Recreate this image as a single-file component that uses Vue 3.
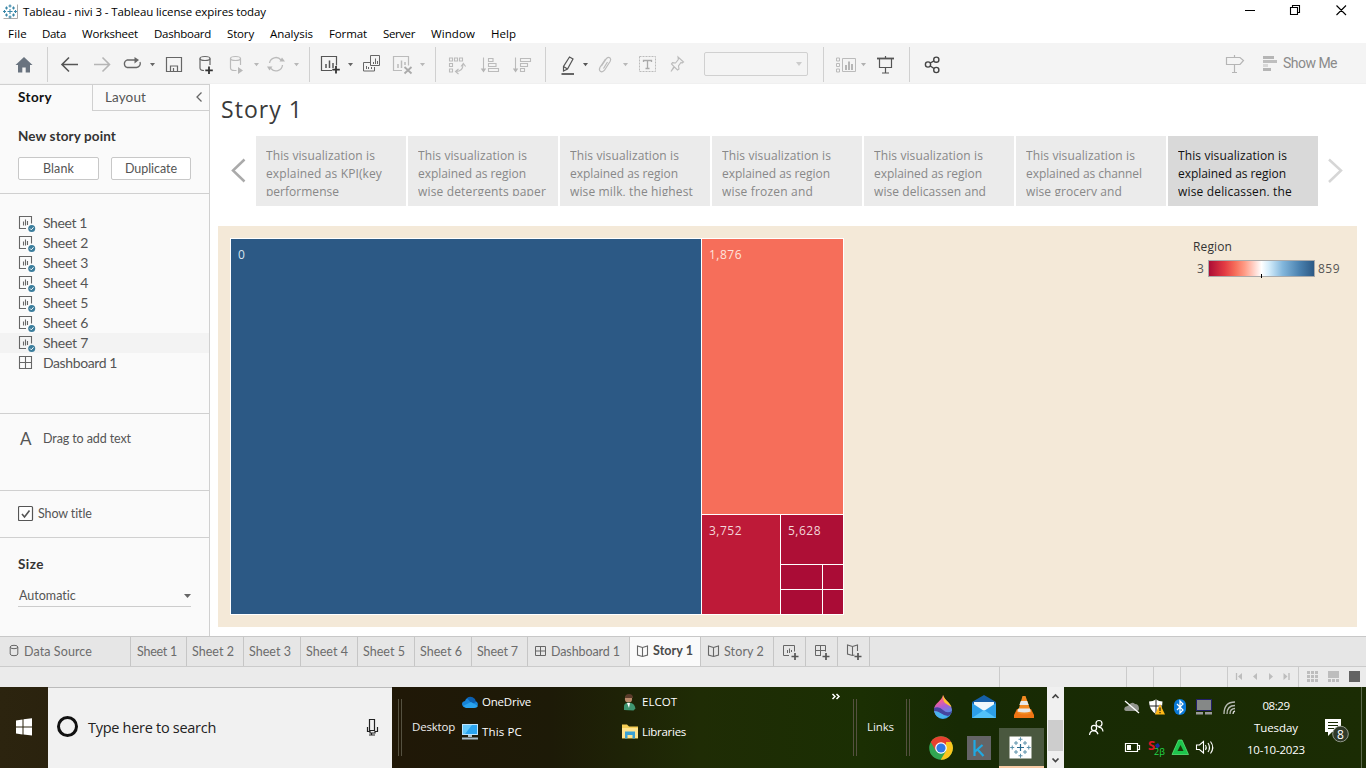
<script setup>
import { h } from 'vue'

// An icon whose drawing uses window coordinates: the viewBox is its slot in the window.
const Ic = (p, { slots }) =>
  h('svg', { width: p.w, height: p.h, viewBox: `${p.x} ${p.y} ${p.w} ${p.h}` }, slots.default ? slots.default() : [])

// Spreads a label's letters so that it takes the given width.
const vFit = {
  mounted(el, { value }) {
    const natural = el.getBoundingClientRect().width
    el.style.letterSpacing = (value - natural) / el.textContent.length + 'px'
  }
}

const menus = [
  ['File', 8, 19], ['Data', 42, 24], ['Worksheet', 82, 56], ['Dashboard', 154, 57], ['Story', 227, 27],
  ['Analysis', 270, 43], ['Format', 329, 38], ['Server', 383, 32], ['Window', 431, 44], ['Help', 491, 25]
].map(([name, x, w], i, all) => ({ name, w, gap: i ? x - all[i - 1][1] - all[i - 1][2] : 8 }))

const sheets = [1, 2, 3, 4, 5, 6, 7]
const sheetTabs = [
  { n: 1, w: 56, t: 40 }, { n: 2, w: 57, t: 42 }, { n: 3, w: 57, t: 42 }, { n: 4, w: 57, t: 42 },
  { n: 5, w: 57, t: 42 }, { n: 6, w: 57, t: 42 }, { n: 7, w: 56, t: 41 }
]
const points = [
  [['explained as KPI(key', 116], ['performense', 73]],
  [['explained as region', 108], ['wise detergents paper', 128]],
  [['explained as region', 108], ['wise milk, the highest', 123]],
  [['explained as region', 108], ['wise frozen and', 91]],
  [['explained as region', 108], ['wise delicassen and', 112]],
  [['explained as channel', 116], ['wise grocery and', 96]],
  [['explained as region', 108], ['wise delicassen, the', 114]]
]
const stat = [127, 27, 27, 47, 71]
const dots = [[0, -11], [0, 11], [-11, 0], [11, 0], [-6, -6], [6, -6], [-6, 6], [6, 6]]
</script>

<template>
  <div class="win">
    <header class="title">
      <Ic :x="0" :y="0" :w="23" :h="24">
        <rect x="3" y="4" width="15" height="15" fill="#fff" />
        <path d="M3.5 18.5h14v-14" fill="none" stroke="#aaa" />
        <path d="M10 9v5M7.5 11.500h5M10 4.500v3M8.500 6h3M10 15.500v3M8.500 17h3M4.500 10v3M3 11.500h3M15.500 10v3M14 11.500h3M6.500 6.500v3M5 8h3M13.500 6.500v3M12 8h3M6.500 13.500v3M5 15h3M13.500 13.500v3M12 15h3" stroke="#3a87a8" stroke-width="1.1" />
      </Ic>
      <span class="up" v-fit="243">Tableau - nivi 3 - Tableau license expires today</span>
      <Ic class="push" :x="1230" :y="0" :w="136" :h="24">
        <g fill="none" stroke="#000" stroke-width="1.100">
          <path d="M1245 10.500h10M1290.500 7.500h7v7h-7zM1292.500 7.500v-2h7v7h-2M1336.500 5.500l9.500 9.500M1346 5.500l-9.500 9.500" />
        </g>
      </Ic>
    </header>
    <nav class="menu">
      <span v-for="m in menus" :key="m.name" class="mi" :style="{ marginLeft: m.gap + 'px', width: m.w + 'px' }"><span v-fit="m.w">{{ m.name }}</span></span>
    </nav>

    <div class="toolbar">
      <Ic :x="0" :y="43" :w="47" :h="41"><path d="M24 57l8.500 8H30v7.500h-4.300v-5h-3.400v5H18V65h-2.500z" fill="#69737f" /></Ic>
      <i class="bar"></i>
      <Ic :x="48" :y="43" :w="66" :h="41">
        <path d="M62.500 64.500H78M69 57.500l-7 7 7 7" fill="none" stroke="#555" stroke-width="1.600" />
        <path d="M94 64.500h15.500M102.500 57.500l7 7-7 7" fill="none" stroke="#b5b5b5" stroke-width="1.600" />
      </Ic>
      <Ic :x="114" :y="43" :w="46" :h="41">
        <path d="M131 67.500h-4a4 4 0 0 1 0-7.500h10M131 67.500h5.500a4 4 0 0 0 3.500-5.500" fill="none" stroke="#666" stroke-width="1.300" />
        <path d="M134.500 57l4.500 3-4.500 3.500z" fill="#666" /><path d="M150 63h5l-2.500 3.300z" fill="#666" />
      </Ic>
      <Ic :x="160" :y="43" :w="30" :h="41"><path d="M166.500 57.500h15v14h-15zM170.500 71v-5h7v5M173.500 71v-3" fill="none" stroke="#666" stroke-width="1.200" /></Ic>
      <Ic :x="190" :y="43" :w="34" :h="41">
        <g fill="none" stroke="#666" stroke-width="1.200"><ellipse cx="205" cy="58.500" rx="5" ry="2" /><path d="M200 58.500v9.500q0 2.500 4 2.500M210 58.500v6.500" /></g>
        <path d="M209 66.500v7.500M205.300 70.300h7.500" stroke="#333" stroke-width="1.800" />
      </Ic>
      <Ic :x="224" :y="43" :w="40" :h="41">
        <g fill="none" stroke="#bbb" stroke-width="1.200"><ellipse cx="235.500" cy="58.500" rx="5" ry="2" /><path d="M230.500 58.500v9.500q0 2.500 4 2.500h2M240.500 58.500v6.500" /></g>
        <path d="M238 67l5 3.500-5 3.500zM254 63h5l-2.500 3.300z" fill="#b8b8b8" />
      </Ic>
      <Ic :x="264" :y="43" :w="45" :h="41">
        <path d="M269.500 63a6.500 6.500 0 0 1 11.500-3M282.500 65a6.500 6.500 0 0 1-11.500 3.500" fill="none" stroke="#bbb" stroke-width="1.300" />
        <path d="M279.500 61.500h5.500l-3-4zM267 66.500h5.500l-3 4zM294 63h5l-2.500 3.300z" fill="#b8b8b8" />
      </Ic>
      <i class="bar"></i>
      <Ic :x="310" :y="43" :w="50" :h="41">
        <path d="M332 70.500h-10.500v-14h15v9" fill="none" stroke="#555" stroke-width="1.200" />
        <path d="M326 64v4M329.500 60.500v7.500M333 63v5" stroke="#555" stroke-width="1.500" />
        <path d="M336 66v7.500M332.300 69.700h7.500" stroke="#333" stroke-width="1.800" /><path d="M348 63h5l-2.500 3.300z" fill="#666" />
      </Ic>
      <Ic :x="360" :y="43" :w="26" :h="41"><path d="M370.500 55.500h9v10h-9zM370.500 62.500h-7v8.500h11v-4M373.500 62v2M375.500 58.500V64M377.500 61v3M366.500 66v3M368.500 67v2M371.500 67v2" fill="none" stroke="#666" /></Ic>
      <Ic :x="386" :y="43" :w="49" :h="41">
        <path d="M402 70.500h-8.500v-14h15v9" fill="none" stroke="#bbb" stroke-width="1.200" />
        <path d="M398 64v4M401.500 60.500v7.500M405 62v3" stroke="#bbb" stroke-width="1.500" />
        <path d="M404.500 67l7 6.500M411.500 67l-7 6.500" stroke="#aaa" stroke-width="1.800" /><path d="M420 63h5l-2.500 3.300z" fill="#b8b8b8" />
      </Ic>
      <i class="bar"></i>
      <Ic :x="436" :y="43" :w="109" :h="41">
        <g fill="none" stroke="#bbb" stroke-width="1.100">
          <path d="M449.500 58h3v3h-3zM454.500 58h3v3h-3zM459.500 58h3v3h-3zM449.500 63.500h3v3h-3zM449.500 69h3v3h-3zM463 64.500q0 7-7 7M461 66.500l2.300-3 2.300 3M458.500 69l-3 2.500 3 2.500" />
          <path d="M483.500 57.500V70M488.500 58.500h4.500v3h-4.500zM488.500 63.500h7.500v3h-7.500zM488.500 68.500h10v3h-10z" />
          <path d="M515.500 57.500V70M520.500 58.500h10v3h-10zM520.500 63.500h7v3h-7zM520.500 68.500h4v3h-4z" />
        </g>
        <path d="M480.700 68.500h5.500l-2.700 4zM512.800 68.500h5.500l-2.700 4z" fill="#b5b5b5" />
      </Ic>
      <i class="bar"></i>
      <Ic :x="546" :y="43" :w="84" :h="41">
        <path d="M569.500 57l3.500 2-5.500 10-4 2v-4.500zM563.500 66.500l4 2.500" fill="none" stroke="#555" stroke-width="1.200" />
        <path d="M561.500 74h12.500" stroke="#555" stroke-width="1.800" /><path d="M583 63h5l-2.500 3.300z" fill="#555" />
        <path d="M601.500 66l5-7.500q2-2 3.700-.3 1 1.300 0 3l-5.700 9q-2 2.500-4.300 1-1.500-1.500-.2-4l5.500-8M603.500 68.500l4-6.500" fill="none" stroke="#bbb" stroke-width="1.200" />
        <path d="M623 63h5l-2.500 3.300z" fill="#b8b8b8" />
      </Ic>
      <Ic :x="630" :y="43" :w="74" :h="41">
        <rect x="639.500" y="56.500" width="16" height="15" fill="none" stroke="#bbb" stroke-dasharray="2 1" />
        <path d="M643.500 62v-1.500h8V62M647.500 60.500v8M645.500 68.500h4" fill="none" stroke="#aaa" stroke-width="1.300" />
        <path d="M678 57l5.500 5-1.500 1-1-.5-2.500 3.500.5 3-1.500 1-3-3-3.500 4.500 3-5-2.500-2.500 1-1.300 3 .3 2.800-3.500z" fill="none" stroke="#bbb" stroke-width="1.100" />
      </Ic>
      <div class="combo"><Ic :x="795" :y="60" :w="7" :h="8"><path d="M796 62h6l-3 4z" fill="#ccc" /></Ic></div>
      <i class="bar far"></i>
      <Ic :x="824" :y="43" :w="85" :h="41">
        <path d="M836.500 58h3v3h-3zM836.500 63.500h3v3h-3zM836.500 69h3v3h-3zM842.500 58.500h13v13h-13z" fill="none" stroke="#bbb" />
        <path d="M846 65v5M849 61.500v8.500M852 64v6" stroke="#b0b0b0" stroke-width="1.800" /><path d="M861 63h5l-2.500 3.300z" fill="#b0b0b0" />
        <path d="M879.500 58.500v9h12v-9M885.500 56v2M885.500 67.500V73M882 73h7" fill="none" stroke="#555" stroke-width="1.200" /><path d="M877 58.500h17" stroke="#555" stroke-width="1.800" />
      </Ic>
      <i class="bar"></i>
      <Ic :x="910" :y="43" :w="40" :h="41"><g fill="none" stroke="#444" stroke-width="1.400"><circle cx="928" cy="64.500" r="2.600" /><circle cx="936.300" cy="59.700" r="2.600" /><circle cx="936.300" cy="70" r="2.600" /><path d="M930.300 63l3.700-2.200M930.300 66l3.700 2.500" /></g></Ic>
      <Ic class="push" :x="1220" :y="43" :w="63" :h="41">
        <path d="M1226.500 57.500h13.500l3.500 3-3.500 4h-13.500zM1234.500 55v2.500M1234.500 64.500v8M1232 72.500h5" fill="none" stroke="#b5b5b5" stroke-width="1.200" />
        <path d="M1263 56h11v3h-11zM1263 68h8v3h-8z" fill="#b5b5b5" /><path d="M1263 60h14v3h-14z" fill="#bebebe" /><path d="M1263 64h5v3h-5z" fill="#d8d8d8" />
      </Ic>
      <span class="showme"><span v-fit="54">Show Me</span></span>
    </div>

    <main class="main">
      <aside class="side">
        <div class="stabs"><div class="st1"><b v-fit="34">Story</b></div><div class="st2"><span class="up" v-fit="41">Layout</span><Ic :x="193" :y="90" :w="10" :h="14"><path d="M201.500 91.500l-4.500 4.500 4.500 4.500" fill="none" stroke="#666" stroke-width="1.300" /></Ic></div></div>
        <section class="newp">
          <h3><span v-fit="98">New story point</span></h3>
          <div class="btns"><button><span v-fit="31">Blank</span></button><button><span v-fit="52">Duplicate</span></button></div>
        </section>
        <ul class="list">
          <li v-for="n in sheets" :key="n" :class="{ hov: n === 7 }">
            <Ic :x="18" :y="213" :w="25" :h="20">
              <path d="M26 228.500h-6.500v-12h12v7M23.500 221.500v4M25.500 219.500v6M27.500 221v4" fill="none" stroke="#666" stroke-width="1.100" />
              <circle cx="31.700" cy="228.600" r="3.500" fill="#3b7d9c" /><path d="M30 228.500l1.300 1.300 2.200-2.500" fill="none" stroke="#fff" />
            </Ic>
            <span class="up" v-fit="n === 1 ? 44 : 45">Sheet {{ n }}</span>
          </li>
          <li><Ic :x="18" :y="353" :w="25" :h="20"><path d="M19.500 356.500h12v12h-12zM25.500 356.500v12M19.500 362.500h12" fill="none" stroke="#666" stroke-width="1.100" /></Ic><span class="up" v-fit="74">Dashboard 1</span></li>
        </ul>
        <section class="drag"><span class="big">A</span><span v-fit="88">Drag to add text</span></section>
        <section class="show"><Ic :x="18" :y="505" :w="20" :h="17"><rect x="18.500" y="506.500" width="14" height="14" rx="1" fill="#fff" stroke="#555" stroke-width="1.200" /><path d="M22 514l2.500 3 5-6.500" fill="none" stroke="#555" stroke-width="1.600" /></Ic><span v-fit="54">Show title</span></section>
        <section class="size"><h3><span v-fit="26">Size</span></h3><div class="sel"><span v-fit="57">Automatic</span><Ic :x="184" :y="592" :w="7" :h="6"><path d="M184 593h7l-3.500 4z" fill="#666" /></Ic></div></section>
      </aside>

      <div class="story">
        <h1><span v-fit="82">Story 1</span></h1>
        <div class="nav">
          <Ic :x="218" :y="136" :w="38" :h="70"><path d="M244.500 159.500L233 170.500l11.500 11" fill="none" stroke="#aaa" stroke-width="2.500" /></Ic>
          <div class="cards">
            <div v-for="(p, i) in points" :key="i" class="card" :class="{ on: i === 6 }"><div class="clip">
              <div><span v-fit="109">This visualization is</span></div>
              <div v-for="l in p" :key="l[0]"><span v-fit="l[1]">{{ l[0] }}</span></div>
            </div></div>
          </div>
          <Ic :x="1318" :y="136" :w="39" :h="70"><path d="M1329 159.500l12 11-12 11.500" fill="none" stroke="#d6d6d6" stroke-width="2.500" /></Ic>
        </div>
        <div class="canvas">
          <div class="tree">
            <div class="cell blue"><span v-fit="7">0</span></div>
            <div class="right">
              <div class="cell coral"><span v-fit="33">1,876</span></div>
              <div class="low">
                <div class="cell red"><span v-fit="33">3,752</span></div>
                <div class="lowr">
                  <div class="cell deep"><span v-fit="33">5,628</span></div>
                  <div class="tiny"><i></i><i></i><i></i><i></i></div>
                </div>
              </div>
            </div>
          </div>
          <div class="legend">
            <div class="lt"><span v-fit="39">Region</span></div>
            <div class="lr"><span class="three">3</span><div class="ramp"><i></i></div><span v-fit="22">859</span></div>
          </div>
        </div>
      </div>
    </main>

    <div class="tabs">
      <div class="tab ds"><Ic :x="9" :y="644" :w="15" :h="16"><g fill="none" stroke="#666"><ellipse cx="14" cy="647" rx="3.800" ry="1.700" /><path d="M10.200 647v7q0 1.700 3.800 1.700t3.800-1.700v-7" /></g></Ic><span v-fit="68">Data Source</span></div>
      <div v-for="t in sheetTabs" :key="t.n" class="tab sh" :style="{ width: t.w + 'px' }"><span v-fit="t.t">Sheet {{ t.n }}</span></div>
      <div class="tab dash"><Ic :x="534" :y="643" :w="17" :h="16"><path d="M535.500 645.500h10v9h-10zM540.500 645.500v9M535.500 650h10" fill="none" stroke="#666" /></Ic><span v-fit="69">Dashboard 1</span></div>
      <div class="tab s1"><Ic :x="636" :y="643" :w="17" :h="16"><path d="M642.500 646.500l-5-1.500v9l5 1.500 5-1.500v-9zv9" fill="none" stroke="#666" stroke-width="1.100" /></Ic><b class="up" v-fit="40">Story 1</b></div>
      <div class="tab s2"><Ic :x="636" :y="643" :w="17" :h="16"><path d="M642.500 646.500l-5-1.500v9l5 1.500 5-1.500v-9zv9" fill="none" stroke="#666" stroke-width="1.100" /></Ic><span v-fit="40">Story 2</span></div>
      <div class="tab ad"><Ic :x="774" :y="637" :w="31" :h="29"><path d="M789 655.500h-5.500v-10h11v6M787.500 650v3M789.500 648.500v4.500M791.500 650v2" fill="none" stroke="#666" /><path d="M795 653v7M791.500 656.500h7" stroke="#555" stroke-width="1.700" /></Ic></div>
      <div class="tab ad"><Ic :x="806" :y="637" :w="31" :h="29"><path d="M821 655.500h-5.500v-10h10v6M820.500 645.500v10M815.500 650.500h10" fill="none" stroke="#666" /><path d="M826 653v7M822.500 656.500h7" stroke="#555" stroke-width="1.700" /></Ic></div>
      <div class="tab ad"><Ic :x="838" :y="637" :w="31" :h="29"><path d="M857.500 651v-6l-5 1.500-5-1.500v9l5 1.500 2-.5M852.500 646.500v9" fill="none" stroke="#666" stroke-width="1.100" /><path d="M858 653v7M854.500 656.500h7" stroke="#555" stroke-width="1.700" /></Ic></div>
    </div>
    <div class="status">
      <i v-for="(w, i) in stat" :key="i" :style="{ width: w + 'px' }"><Ic v-if="i === 4" :x="1228" :y="667" :w="70" :h="20"><path d="M1236.500 673v7M1289 673v7" stroke="#bbb" stroke-width="1.300" /><path d="M1242 673v7l-4-3.500zM1257 673v7l-4-3.500zM1269 673v7l4-3.500zM1283.500 673v7l4-3.500z" fill="#bdbdbd" /></Ic></i>
      <Ic :x="1298" :y="667" :w="68" :h="20">
        <path d="M1298.500 667v20" stroke="#cbcbcb" />
        <path d="M1307 672.500h11M1307 676.500h11M1307 680.500h11M1328 680.500h11" stroke="#bdbdbd" stroke-width="3" stroke-dasharray="3 1" /><path d="M1328 671h11v7h-11z" fill="#bdbdbd" /><path d="M1349 671h11v11h-11z" fill="#636363" />
      </Ic>
    </div>

    <footer class="task">
      <Ic :x="0" :y="687" :w="48" :h="81"><path d="M16 720.500l6.500-1v7H16zM23.500 719.300l8.500-1v8.200h-8.500zM16 727.500h6.500v7l-6.500-1zM23.500 727.500h8.500v8l-8.500-1z" fill="#fff" /></Ic>
      <div class="search"><i class="ring"></i><span class="up" v-fit="128">Type here to search</span>
        <Ic class="push" :x="360" :y="701" :w="32" :h="54"><path d="M369.500 719.500h5v11h-5zM367.500 727v4.500h2.500v1.500h5v-1.500h2.500V727M371.500 733v2M369 735h6" fill="none" stroke="#222" stroke-width="1.200" /></Ic>
      </div>
      <i class="dbl"></i>
      <div class="dt"><span v-fit="43">Desktop</span></div>
      <div class="links">
        <div class="lk"><Ic :x="462" :y="691" :w="20" :h="20"><path d="M465 706.500c-4-1-4-6 0-6.500 2-5 8-4 9 0 5 0 5 6 1 6.500z" fill="#1784d8" /><path d="M467 697q4-3 8 1l1 3-4 2z" fill="#0b5fb0" /><path d="M463 705l8-4 7 4q-1 2-4 2h-8z" fill="#29a3ef" /></Ic><span class="up" v-fit="49">OneDrive</span></div>
        <div class="lk b"><Ic :x="622" :y="691" :w="20" :h="20"><circle cx="628.500" cy="698" r="3.600" fill="#b98a6b" /><path d="M625 697q0-4 4-4t4 4z" fill="#5a3b2a" /><path d="M624 709v-4q0-3 4.500-3.500 6 0 7 6l-2 2z" fill="#3f9570" /><path d="M627 702l2 5 1-5z" fill="#fff" /></Ic><span class="up" v-fit="35">ELCOT</span></div>
        <div class="lk"><Ic :x="462" :y="722" :w="20" :h="20"><path d="M462 724h16v11h-16z" fill="#bce4ff" /><path d="M463 725h14v9h-14z" fill="#2ba4f0" /><path d="M463 725h9l-7 9h-2z" fill="#65c8fb" /><path d="M468 735h4v2h-4zM462 737.500h16v2h-16z" fill="#adc0cc" /></Ic><span class="up" v-fit="40">This PC</span></div>
        <div class="lk b"><Ic :x="622" :y="722" :w="20" :h="20"><path d="M622 724.500h5l2 2h9v12h-16z" fill="#f5cd55" /><path d="M622 728h16v10h-16z" fill="#ffe38e" /><path d="M625 738.500v-7h10v7h-2.500v-3.500h-5v3.500z" fill="#39a1d4" /></Ic><span class="up" v-fit="44">Libraries</span></div>
      </div>
      <Ic :x="822" :y="687" :w="31" :h="81"><path d="M832.500 694l2.500 2.500-2.500 2.500M836.500 694l2.500 2.500-2.500 2.500" fill="none" stroke="#fff" stroke-width="1.500" /></Ic>
      <i class="dbl nm"></i>
      <div class="dt l2"><span v-fit="27">Links</span></div>
      <i class="dbl nm"></i>
      <div class="pins">
        <Ic :x="922" :y="687" :w="42" :h="41">
          <defs><linearGradient id="kr" x1="0" y1="0" x2=".3" y2="1"><stop offset="0" stop-color="#ff9a4a" /><stop offset=".35" stop-color="#ee5c9c" /><stop offset=".6" stop-color="#a85fd6" /><stop offset="1" stop-color="#3a9fe8" /></linearGradient></defs>
          <path d="M943 695c2 6 9 9 9 15a9 9 0 0 1-18 0c0-7 8-9 9-15z" fill="url(#kr)" /><path d="M943 695c1 5 7 7 8.500 12l-5-3q-4-2-3.500-9z" fill="#ffc42d" /><path d="M934 708q5-2 9 2t9 1q-1 4-4 5-5-1-8-3t-6-2z" fill="#45459f" /><path d="M934 711q4 0 8 3t6 2q-5 4-10 1-3-2-4-6z" fill="#48b4ee" />
        </Ic>
        <Ic :x="964" :y="687" :w="35" :h="41"><path d="M972 702l12-7 12 7v16h-24z" fill="#155fa8" /><path d="M974 702h20v9h-20z" fill="#eef7fc" /><path d="M972 703l12 8 12-8v15h-24z" fill="#2c9ee8" /><path d="M972 718l12-8 12 8z" fill="#52c1f8" /></Ic>
        <Ic :x="999" :y="687" :w="45" :h="41"><path d="M1014 715l3-6h14l3 6v3h-20z" fill="#ef7514" /><path d="M1022.500 696h3l6 17q-7 3-14 0z" fill="#f28a22" /><path d="M1020.800 701h6.400l1.500 4h-9.400zM1018.300 708.500h11.500l1 3q-6 2-13.500 0z" fill="#e8e8e8" /></Ic>
        <Ic :x="922" :y="728" :w="42" :h="40">
          <circle cx="941" cy="748" r="11.800" fill="#31a552" /><path d="M930.800 742a11.800 11.800 0 0 1 20.400 0L941 748z" fill="#e6402f" /><path d="M930.800 742l5.200 9 5-3V741l10.200 1z" fill="#e6402f" /><path d="M951.200 742a11.800 11.800 0 0 1-10.500 17.800L946 751v-9z" fill="#fbc51d" /><circle cx="941" cy="748" r="5.800" fill="#fff" /><circle cx="941" cy="748" r="4.600" fill="#3378e5" />
        </Ic>
        <Ic :x="964" :y="728" :w="35" :h="40"><path d="M967 736h24v24h-24z" fill="#646466" /><path d="M974.500 740v16M982.500 745l-7.500 6.500M977.500 749.500l6 6.500" fill="none" stroke="#20a9e1" stroke-width="2.200" /></Ic>
        <div class="act"><Ic :x="999" :y="728" :w="45" :h="38">
          <path d="M1009.500 736.500h22v22h-22z" fill="#fff" />
          <g transform="translate(1020.500 747.500)"><path d="M0-3.500v7M-3.500 0h7" stroke="#2b6c8f" stroke-width="1.200" /><path v-for="(d, i) in dots" :key="i" :transform="`translate(${d[0] * .75} ${d[1] * .75})`" d="M0-2v4M-2 0h4" stroke="#5b91aa" /></g>
        </Ic></div>
      </div>
      <div class="scroll"><Ic :x="1047" :y="687" :w="17" :h="81"><path d="M1048 720h15v31h-15z" fill="#cdcdcd" /><path d="M1052.500 698l3-3 3 3M1052.500 758.500l3 3 3-3" fill="none" stroke="#444" stroke-width="1.700" /></Ic></div>
      <Ic :x="1064" :y="687" :w="55" :h="81"><g fill="none" stroke="#fff" stroke-width="1.200"><circle cx="1099" cy="723.500" r="3" /><circle cx="1094" cy="728" r="2.600" /><path d="M1089.500 735q.5-4 4.500-4.300 3 .3 4 3.500M1098.500 727.500q4-.5 4.500 4" /></g></Ic>
      <Ic :x="1119" :y="687" :w="125" :h="81">
        <path d="M1126 711q-3-1-1-4 3-1 4-2 3-4 6-1 4 0 4 5 0 2-2 2z" fill="#92958e" /><path d="M1125 701l14 12" stroke="#fff" stroke-width="1.300" />
        <path d="M1156 699.500q3 2 6.500 2 0 9-6.500 12.500-6.500-3.500-7-12.500 4 0 7-2z" fill="#fff" /><path d="M1156 700v13M1149 706h13" stroke="#222" /><path d="M1160 704l5 10.500h-10z" fill="#ffb816" /><path d="M1160 707.500v3.500M1160 712v1.200" stroke="#222" stroke-width="1.200" />
        <rect x="1174" y="699" width="12" height="16" rx="6" fill="#0879d8" /><path d="M1177 704l6 6-3 3v-12l3 3-6 6" fill="none" stroke="#fff" stroke-width="1.200" />
        <path d="M1196.500 699.500h15v11h-15z" fill="#858887" stroke="#221f6a" /><path d="M1196 712h7v2.500h-7zM1205 712h7v2.500h-7z" fill="#9a9a9a" />
        <g fill="none" stroke="#ddd" stroke-width="1.300"><path d="M1224 714q0-12 11-12M1227 714q0-8.500 8-8.500M1230 714q0-5.500 5-5.500" opacity=".8" /><path d="M1233 714q0-2.500 2-3" /></g>
        <path d="M1125.500 743.500h12v8h-12zM1137.500 745.500h2v4h-2z" fill="none" stroke="#fff" stroke-width="1.200" /><path d="M1127 745h4v5h-4z" fill="#fff" />
        <path d="M1155 745l3-2 2 3-3 3z" fill="#1c2a9c" />
        <text x="1148" y="750" font-size="13" font-weight="700" fill="#e01525">S</text><text x="1154" y="755" font-size="9" fill="#21dc4b">2β</text>
        <path d="M1178.500 740h3.500l6.500 14.500h-16.500z" fill="#1dc54c" stroke="#62f383" stroke-width=".7" /><path d="M1180.500 745l-3 6h6z" fill="#1b3a08" />
        <path d="M1196.500 745h3l4-3.500v11.500l-4-3.500h-3zM1205.500 745q1.500 2.500 0 5M1208 743q3 4.500 0 9M1210.500 741.500q4.500 6 0 12" fill="none" stroke="#fff" stroke-width="1.100" />
      </Ic>
      <div class="clock"><span v-fit="27">08:29</span><span v-fit="44">Tuesday</span><span v-fit="58">10-10-2023</span></div>
      <Ic class="push" :x="1308" :y="687" :w="58" :h="81">
        <path d="M1325 719h16v13h-9l-4 4v-4h-3z" fill="#fff" /><path d="M1328 722.500h10M1328 725.500h10M1328 728.500h6" stroke="#1a2b05" />
        <circle cx="1340.500" cy="734" r="7.800" fill="#303a29" stroke="#91978a" /><text x="1340.500" y="738.500" font-size="12" text-anchor="middle" fill="#fff">8</text>
        <path d="M1361.500 687v81" stroke="#5d694e" />
      </Ic>
    </footer>
  </div>
</template>

<style>
html, body { overflow: hidden; background: #fff; }
</style>
<style scoped>
* { box-sizing: border-box; }
.win { width: 1366px; height: 768px; display: flex; flex-direction: column; overflow: hidden; background: #fff; font: 12px "Open Sans", "Noto Sans", sans-serif; color: #000; white-space: nowrap; }
svg { display: block; flex: none; }
i { display: block; font-style: normal; }
.push { margin-left: auto; }
.up { padding-bottom: 2px; }
.title { display: flex; align-items: center; height: 24px; font-size: 11.5px; }
.menu { display: flex; align-items: center; height: 19px; font-size: 11.5px; flex: none; }
.mi { display: block; flex: none; }
.toolbar { display: flex; height: 41px; background: #f4f4f4; border-bottom: 1px solid #f0f0f0; flex: none; overflow: hidden; }
.bar { width: 1px; height: 35px; margin-top: 4px; background: #d0d0d0; flex: none; }
.bar.far { margin-left: 15px; }
.combo { width: 104px; height: 24px; margin-top: 9px; border: 1px solid #d0d0d0; border-radius: 2px; display: flex; align-items: center; justify-content: flex-end; padding-right: 5px; flex: none; }
.showme { width: 83px; font: 14px/41px Roboto, sans-serif; color: #8a8a8a; }
.main { display: flex; height: 552px; flex: none; }
.side { width: 210px; background: #fafafa; border-right: 1px solid #d0d0d0; border-top: 1px solid #d0d0d0; font-family: Lato, sans-serif; color: #555; font-size: 13px; }
.stabs { display: flex; height: 26px; }
.st1 { width: 92px; padding-left: 18px; line-height: 25px; color: #111; font-size: 13.5px; }
.st2 { width: 117px; border-left: 1px solid #d0d0d0; border-bottom: 1px solid #d0d0d0; padding: 0 6px 0 12px; display: flex; align-items: center; justify-content: space-between; font-size: 13.5px; }
h3 { margin: 0; font-size: 13.500px; font-weight: 700; color: #333; line-height: 20px; }
.newp { height: 83px; padding: 15px 0 0 18px; border-bottom: 1px solid #d0d0d0; }
.btns { display: flex; gap: 12px; margin-top: 11px; }
button { width: 81px; height: 23px; padding: 0; background: #fff; border: 1px solid #c8c8c8; border-radius: 2px; font: 12.500px/20px Lato, sans-serif; color: #555; }
button + button { width: 80px; }
.list { list-style: none; margin: 0; padding: 19px 0 0; height: 220px; border-bottom: 1px solid #d0d0d0; font-size: 14px; }
li { height: 20px; display: flex; align-items: center; padding-left: 18px; }
li.hov { background: #f3f3f3; }
.drag { height: 77px; padding: 14px 0 0 20px; display: flex; border-bottom: 1px solid #d0d0d0; font-size: 12.500px; line-height: 22px; }
.big { width: 23px; font: 17px/22px Lato, sans-serif; color: #555; }
.show { height: 47px; display: flex; align-items: center; padding: 0 0 1px 18px; border-bottom: 1px solid #d0d0d0; font-size: 12.500px; }
.size { padding: 16px 18px 0; }
.sel { display: flex; align-items: center; justify-content: space-between; height: 24px; margin-top: 9px; padding: 2px 0 0 1px; border-bottom: 1px solid #ccc; font-size: 12.500px; }
.story { width: 1156px; padding: 0 9px 0 8px; font-family: "Open Sans", sans-serif; }
h1 { margin: 0; height: 52px; padding-left: 3px; font: 400 23px/51px "Open Sans", sans-serif; color: #3a3a3a; }
.nav { display: flex; height: 70px; }
.cards { display: flex; gap: 2px; }
.card { width: 150px; height: 70px; background: #ebebeb; padding: 11px 0 0 10px; font-size: 12px; line-height: 18px; color: #888; }
.card.on { background: #d9d9d9; color: #111; }
.clip { height: 49px; overflow: hidden; }
.canvas { display: flex; justify-content: space-between; width: 1139px; height: 401px; margin-top: 20px; padding: 12px 16px 12px 12px; background: #f4e9d8; }
.tree { width: 614px; height: 377px; padding: 1px; display: grid; grid-template-columns: 470px 141px; gap: 1px; background: #fff; }
.cell { padding: 7px 0 0 7px; font-size: 12px; line-height: 18px; color: #f3d6d8; }
.blue { background: #2c5985; color: #d8e4ee; }
.right { display: grid; grid-template-rows: 275px 99px; gap: 1px; }
.coral { background: #f66e5a; color: #ffe3dc; }
.low { display: grid; grid-template-columns: 78px 62px; gap: 1px; }
.red { background: #be1a38; }
.lowr { display: grid; grid-template-rows: 49px 49px; gap: 1px; }
.deep { background: #ae0f36; }
.tiny { display: grid; grid-template: 24px 24px / 41px 20px; gap: 1px; }
.tiny i { background: #aa0c36; }
.legend { width: 148px; color: #555; }
.lt { color: #333; line-height: 18px; }
.lr { display: flex; align-items: center; margin-top: 3px; height: 18px; }
.three { width: 15px; padding-left: 4px; font-size: 12px; }
.ramp { width: 107px; height: 17px; border: 1px solid #aaa; margin-right: 3px; background: linear-gradient(90deg, #ac0d36, #e33b43 15%, #f66e5a 25%, #ff9c86 34%, #fff 50%, #d5edfb 57%, #83b7dc 70%, #4b82b0 86%, #2c5985); padding: 13px 0 0 52px; }
.ramp i { width: 1px; height: 4px; background: #000; }
.tabs { display: flex; height: 31px; background: #e6e6e6; border-top: 1px solid #c8c8c8; border-bottom: 1px solid #cbcbcb; font: 12.500px Lato, sans-serif; color: #6c6c6c; flex: none; }
.tab { border-right: 1px solid #c6c6c6; display: flex; align-items: center; flex: none; }
.ds { width: 131px; padding-left: 9px; }
.sh { padding-left: 6px; }
.sh + .sh { padding-left: 5px; }
.dash { width: 102px; padding-left: 6px; }
.s1 { width: 71px; padding-left: 6px; background: #fafafa; color: #4a4a4a; }
.s2 { width: 73px; padding-left: 6px; }
.ad { width: 32px; }
.status { display: flex; justify-content: flex-end; height: 20px; background: #ebebeb; flex: none; }
.status i { border-left: 1px solid #cbcbcb; }
.task { display: flex; height: 81px; flex: none; color: #fff; background: linear-gradient(90deg, #2c240f 0, #201807 400px, #1d1a07 550px, #1f2c05 700px, #1b2f03 860px, #172a04 960px, #1b2c04 1366px); font-size: 11.500px; }
.search { width: 344px; background: #f1f1f1; border-top: 1px solid #bbb; display: flex; align-items: center; color: #222; font-size: 14.500px; }
.ring { width: 21px; height: 21px; border: 3px solid #111; border-radius: 50%; margin: 0 10px 3px 9px; }
.dbl { width: 4px; height: 57px; margin: 12px 0 0 6px; border: solid #555140; border-width: 0 1px; flex: none; }
.dbl.nm { margin-left: 0; }
.dt { width: 60px; padding-left: 10px; line-height: 80px; color: #eee; flex: none; }
.l2 { width: 49px; }
.links { width: 360px; height: 60px; display: grid; grid-template: 30px 30px / 160px 200px; flex: none; }
.lk { display: flex; align-items: center; }
.pins { width: 137px; padding-left: 12px; display: grid; grid-template: 41px 40px / 42px 35px 45px; flex: none; }
.act { height: 40px; background: #4a583f; border-bottom: 2px solid #f8cba5; }
.scroll { width: 17px; background: #f0f0f0; flex: none; }
.clock { width: 64px; display: flex; flex-direction: column; align-items: center; padding-top: 8px; line-height: 22px; flex: none; }
</style>
